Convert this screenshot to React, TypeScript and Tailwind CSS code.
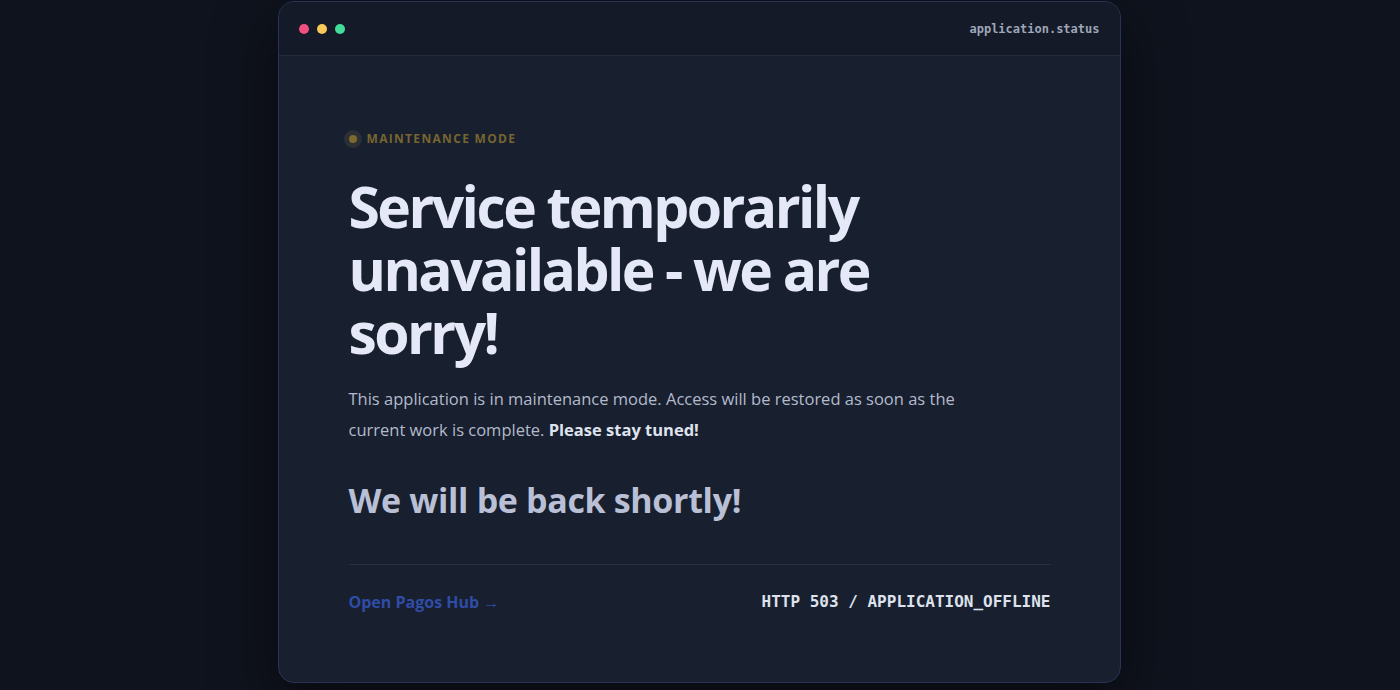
import React from "react";

const sans = { fontFamily: '"Open Sans", "Noto Sans", sans-serif' };
const mono = { fontFamily: '"DejaVu Sans Mono", "Liberation Mono", monospace' };

function WindowDots() {
	return (
		<div className="flex items-center gap-2">
			<span className="w-2.5 h-2.5 rounded-full bg-[#f0507f]" />
			<span className="w-2.5 h-2.5 rounded-full bg-[#f7c95a]" />
			<span className="w-2.5 h-2.5 rounded-full bg-[#43dd9b]" />
		</div>
	);
}

export default function App() {
	return (
		<div className="min-h-screen bg-[#0f131d] flex justify-center pt-px pr-[2px]" style={sans}>
			<div className="w-[843px] h-[682px] rounded-2xl border border-[#2b3354] bg-[#181f2f] overflow-hidden shadow-[0_20px_60px_rgba(0,0,0,0.5)] flex flex-col">
				<div className="h-[54px] shrink-0 bg-[#141a28] border-b border-[#242c40] flex items-center justify-between pl-5 pr-5">
					<WindowDots />
					<span className="text-[12px] font-bold text-[#9ea6b8]" style={mono}>application.status</span>
				</div>

				<div className="flex-1 pl-[70px] pr-[69px] pt-[74px] flex flex-col">
					<div className="flex items-center gap-[5px] -ml-[5px]">
						<span className="w-[18px] h-[18px] rounded-full bg-[#2c2f36] flex items-center justify-center">
							<span className="w-2 h-2 rounded-full bg-[#7d6a2e]" />
						</span>
						<span className="text-[12px] font-bold tracking-[0.11em] text-[#76652f]">MAINTENANCE MODE</span>
					</div>

					<h1 className="mt-[27px] text-[57px] font-bold leading-[63px] tracking-[-0.045em] text-[#e4e8f7] max-w-[560px]">
						Service temporarily unavailable - we are sorry!
					</h1>

					<p className="mt-[19px] text-[16.5px] leading-[31px] text-[#b3bacb] max-w-[620px]">
						This application is in maintenance mode. Access will be restored as soon as the current work is complete.{" "}
						<strong className="font-bold text-[#dfe3ee]">Please stay tuned!</strong>
					</p>

					<h2 className="mt-[35px] text-[34px] font-bold leading-[40px] tracking-[-0.01em] text-[#b9c0d6]">
						We will be back shortly!
					</h2>

					<div className="mt-[44px] border-t border-[#272f42]" />

					<div className="mt-[25px] flex items-center justify-between">
						<a className="text-[16px] font-bold text-[#2f4ca6]" href="#">Open Pagos Hub →</a>
						<span className="text-[16px] font-bold text-[#dde2ec]" style={mono}>HTTP 503 / APPLICATION_OFFLINE</span>
					</div>
				</div>
			</div>
		</div>
	);
}
